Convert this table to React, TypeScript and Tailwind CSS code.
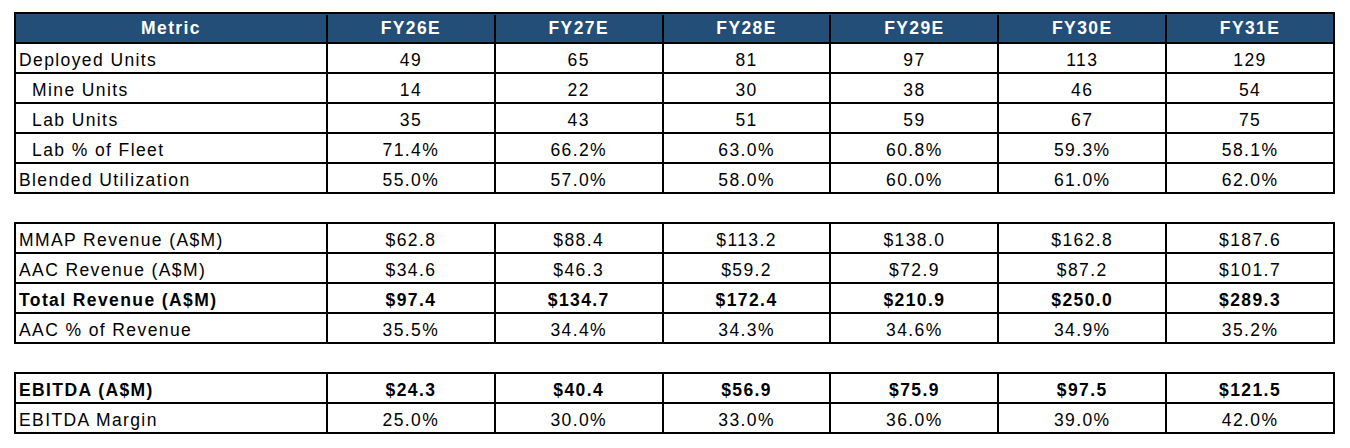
const years = ['FY26E', 'FY27E', 'FY28E', 'FY29E', 'FY30E', 'FY31E'];

type Row = { label: string; values: string[]; indent?: boolean; bold?: boolean };

const operating: Row[] = [
  { label: 'Deployed Units', values: ['49', '65', '81', '97', '113', '129'] },
  { label: 'Mine Units', values: ['14', '22', '30', '38', '46', '54'], indent: true },
  { label: 'Lab Units', values: ['35', '43', '51', '59', '67', '75'], indent: true },
  { label: 'Lab % of Fleet', values: ['71.4%', '66.2%', '63.0%', '60.8%', '59.3%', '58.1%'], indent: true },
  { label: 'Blended Utilization', values: ['55.0%', '57.0%', '58.0%', '60.0%', '61.0%', '62.0%'] },
];

const revenue: Row[] = [
  { label: 'MMAP Revenue (A$M)', values: ['$62.8', '$88.4', '$113.2', '$138.0', '$162.8', '$187.6'] },
  { label: 'AAC Revenue (A$M)', values: ['$34.6', '$46.3', '$59.2', '$72.9', '$87.2', '$101.7'] },
  { label: 'Total Revenue (A$M)', values: ['$97.4', '$134.7', '$172.4', '$210.9', '$250.0', '$289.3'], bold: true },
  { label: 'AAC % of Revenue', values: ['35.5%', '34.4%', '34.3%', '34.6%', '34.9%', '35.2%'] },
];

const earnings: Row[] = [
  { label: 'EBITDA (A$M)', values: ['$24.3', '$40.4', '$56.9', '$75.9', '$97.5', '$121.5'], bold: true },
  { label: 'EBITDA Margin', values: ['25.0%', '30.0%', '33.0%', '36.0%', '39.0%', '42.0%'] },
];

function DataRow({ row, first }: { row: Row; first: boolean }) {
  return (
    <div
      className={`grid grid-cols-[310px_repeat(6,1fr)] ${first ? 'h-[28px]' : 'h-[30px] border-t-2 border-black'} ${
        row.bold ? 'font-bold' : ''
      }`}
    >
      <div className={`flex items-center pt-[3px] ${row.indent ? 'pl-[16px]' : 'pl-[3px]'}`}>{row.label}</div>
      {row.values.map((v, i) => (
        <div key={i} className="flex items-center justify-center border-l-2 border-black pt-[3px]">
          {v}
        </div>
      ))}
    </div>
  );
}

function Block({ rows, header }: { rows: Row[]; header?: boolean }) {
  return (
    <div className="border-2 border-black">
      {header && (
        <div className="grid h-[28px] grid-cols-[310px_repeat(6,1fr)] bg-[#234e78] pt-[1px] font-bold text-white">
          <div className="flex items-center justify-center">Metric</div>
          {years.map((y) => (
            <div key={y} className="flex items-center justify-center border-l-2 border-black">
              {y}
            </div>
          ))}
        </div>
      )}
      {rows.map((r, i) => (
        <DataRow key={r.label} row={r} first={!header && i === 0} />
      ))}
    </div>
  );
}

export default function App() {
  return (
    <div
      className="min-h-[448px] bg-white pl-[14px] pt-[12px] text-[17.5px] tracking-[1.4px] text-black"
      style={{ fontFamily: '"Liberation Sans", Arial, sans-serif' }}
    >
      <div className="flex w-[1321px] flex-col gap-[28px]">
        <Block rows={operating} header />
        <Block rows={revenue} />
        <Block rows={earnings} />
      </div>
    </div>
  );
}
